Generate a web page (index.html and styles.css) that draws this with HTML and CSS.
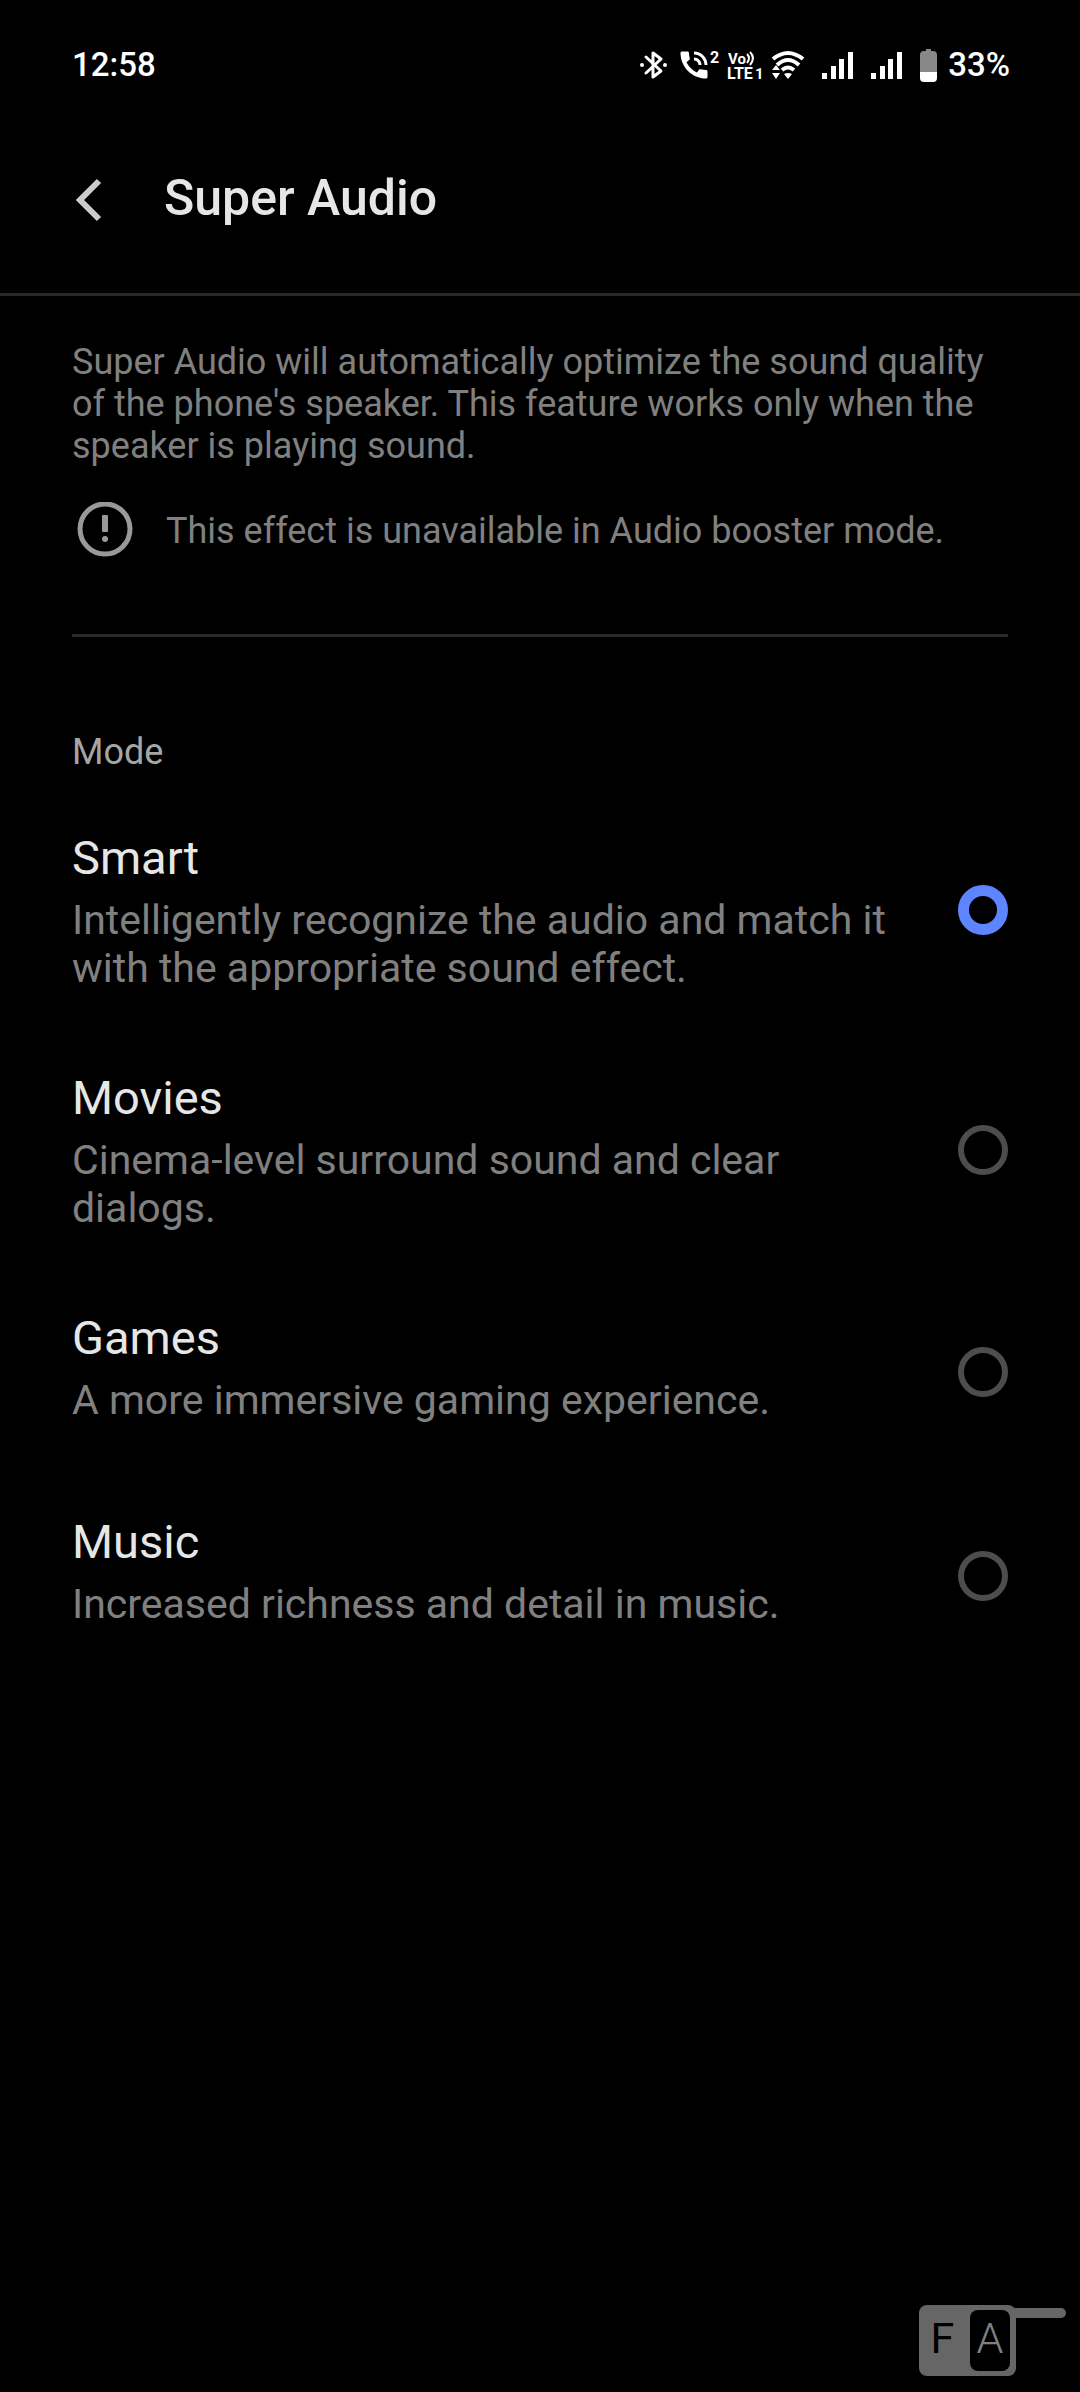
FILE: index.html
```html
<!DOCTYPE html>
<html lang="en">
<head>
  <meta charset="UTF-8" />
  <meta name="viewport" content="width=device-width, initial-scale=1" />
  <title>Super Audio</title>
  <link rel="stylesheet" href="styles.css">
</head>
<body>

  <div class="status-bar">
    <span class="time">12:58</span>
    <div class="status-icons">
      <!-- bluetooth -->
      <svg class="bt" width="28" height="34" viewBox="0 0 28 34" fill="none">
        <path d="M6 9 L21 23 L13 29 V5 L21 11 L6 25" stroke="#fff" stroke-width="3" stroke-linejoin="round" stroke-linecap="round"/>
        <circle cx="2" cy="17" r="2" fill="#fff"/>
        <circle cx="25" cy="17" r="2" fill="#fff"/>
      </svg>
      <!-- wifi calling -->
      <svg class="call" width="40" height="34" viewBox="0 0 40 34" fill="#fff">
        <g transform="translate(-4 -1) scale(1.5)">
          <path d="M20.01 15.38c-1.23 0-2.42-.2-3.53-.56-.35-.12-.74-.03-1.01.24l-1.57 1.97c-2.83-1.35-5.48-3.9-6.89-6.83l1.95-1.66c.27-.28.35-.67.24-1.02-.37-1.11-.56-2.3-.56-3.53 0-.54-.45-.99-.99-.99H4.19C3.65 3 3 3.24 3 3.99 3 13.28 10.73 21 20.01 21c.71 0 .99-.63.99-1.18v-3.45c0-.54-.45-.99-.99-.99z"/>
          <path d="M19 12h2c0-4.97-4.03-9-9-9v2c3.87 0 7 3.13 7 7zm-4 0h2c0-2.76-2.24-5-5-5v2c1.66 0 3 1.34 3 3z"/>
        </g>
        <text class="svg-text" x="30" y="15" font-size="16">2</text>
      </svg>
      <!-- volte -->
      <svg class="volte" width="38" height="34" viewBox="0 0 38 34" fill="#fff">
        <text class="svg-text" x="1" y="16" font-size="15">Vo</text>
        <path d="M20 6 q4 4 0 9 M23 4 q6 6 0 13" fill="none" stroke="#fff" stroke-width="2"/>
        <text class="svg-text" x="0" y="31" font-size="16">LTE</text>
        <text class="svg-text" x="28" y="31" font-size="15">1</text>
      </svg>
      <!-- wifi -->
      <svg class="wifi" width="34" height="34" viewBox="0 0 34 34" fill="none">
        <path d="M2 11 Q17 -1 32 11" stroke="#fff" stroke-width="4"/>
        <path d="M6 17 Q17 7 28 17" stroke="#fff" stroke-width="4"/>
        <path d="M11 22 Q17 17 23 22" stroke="#fff" stroke-width="4"/>
        <path d="M13 26 Q17 24 21 26 L17 31 Z M1 22 L5 17 L9 22 Z M1 25 H9 L5 31 Z" fill="#fff"/>
      </svg>
      <!-- sim 1 -->
      <svg class="signal" width="32" height="34" viewBox="0 0 32 34" fill="#fff">
        <path d="M0 25h5v6h-5z M9 18h5v13h-5z M17 11h5v20h-5z M26 4h5v27h-5z"/>
      </svg>
      <!-- sim 2 -->
      <svg class="signal" width="32" height="34" viewBox="0 0 32 34" fill="#fff">
        <path d="M0 25h5v6h-5z M9 18h5v13h-5z M17 11h5v20h-5z M26 4h5v27h-5z"/>
      </svg>
      <!-- battery -->
      <svg class="battery" width="18" height="34" viewBox="0 0 18 34">
        <path d="M6 1h5v2h2q4 0 4 4v17H0V7q0-4 4-4h2z" fill="#888"/>
        <path d="M0 24h17v6q0 4-4 4H4q-4 0-4-4z" fill="#fff"/>
      </svg>
      <span class="percent">33%</span>
    </div>
  </div>

  <header class="title-bar">
    <button class="back" type="button" aria-label="Back">
      <svg width="30" height="46" viewBox="0 0 30 46" fill="none">
        <path d="M27 3 L8 22 L27 41" stroke="#ccc" stroke-width="6"/>
      </svg>
    </button>
    <h1>Super Audio</h1>
  </header>

  <main class="content">
    <section class="intro">
      <p>Super Audio will automatically optimize the sound quality of the phone's speaker. This feature works only when the speaker is playing sound.</p>
      <div class="notice">
        <svg width="56" height="56" viewBox="0 0 56 56">
          <circle cx="28" cy="27" r="25" fill="none" stroke="#999" stroke-width="5"/>
          <rect x="25" y="13" width="6" height="17" rx="1" fill="#999"/>
          <circle cx="28" cy="37" r="3" fill="#999"/>
        </svg>
        <p>This effect is unavailable in Audio booster mode.</p>
      </div>
    </section>

    <h2>Mode</h2>

    <form class="modes">
      <label class="mode">
        <span class="mode-text">
          <span class="mode-name">Smart</span>
          <span class="mode-desc">Intelligently recognize the audio and match it with the appropriate sound effect.</span>
        </span>
        <input type="radio" name="mode" value="smart" checked>
      </label>
      <label class="mode">
        <span class="mode-text">
          <span class="mode-name">Movies</span>
          <span class="mode-desc">Cinema-level surround sound and clear dialogs.</span>
        </span>
        <input type="radio" name="mode" value="movies">
      </label>
      <label class="mode">
        <span class="mode-text">
          <span class="mode-name">Games</span>
          <span class="mode-desc">A more immersive gaming experience.</span>
        </span>
        <input type="radio" name="mode" value="games">
      </label>
      <label class="mode">
        <span class="mode-text">
          <span class="mode-name">Music</span>
          <span class="mode-desc">Increased richness and detail in music.</span>
        </span>
        <input type="radio" name="mode" value="music">
      </label>
    </form>
  </main>

  <div class="nav-handle"></div>
  <div class="badge">
    <span class="badge-f">F</span>
    <span class="badge-a">A</span>
  </div>

</body>
</html>
```
FILE: styles.css
```css
* { box-sizing: border-box; }
body {
  background: #000; color: #e6e6e6;
  font-family: Roboto, "Liberation Sans", sans-serif;
  margin: 0; min-height: 100vh;
}
h1, h2, p { margin: 0; font-weight: 400; }

.status-bar {
  display: flex; justify-content: space-between; align-items: center;
  height: 128px; padding: 2px 70px 0 72px;
  color: #fff; font-size: 33px; line-height: 40px; font-weight: 500;
}
.status-icons { display: flex; align-items: center; }
.status-icons svg { display: block; flex: none; }
.call { margin-left: 12px; }
.volte { margin-left: 7px; }
.wifi { margin-left: 6px; }
.signal { margin-left: 17px; }
.battery { margin-left: 17px; }
.percent { margin-left: 10px; }
.svg-text { font-family: Roboto, "Liberation Sans", sans-serif; font-weight: 700; }

.title-bar {
  display: flex; align-items: center; gap: 20px;
  height: 168px; padding: 0 72px 26px;
  border-bottom: 3px solid #292929;
}
.title-bar h1 { font-size: 50px; line-height: 60px; font-weight: 500; }
.back {
  display: flex; align-items: center;
  width: 72px; height: 72px; padding: 6px 0 0;
  background: none; border: none; cursor: pointer;
}

.content { padding: 0 72px; }
.intro {
  padding: 45px 0 76px;
  border-bottom: 3px solid #292929;
  color: #808080; font-size: 36px; line-height: 42px;
}
.notice { display: flex; align-items: center; gap: 33px; margin-top: 35px; padding-left: 5px; }
.notice svg { display: block; flex: none; }
.notice p { padding-top: 2px; }

h2 { padding-top: 94px; color: #a6a6a6; font-size: 36px; line-height: 42px; }

.modes { padding-top: 17px; }
.mode {
  display: flex; align-items: center; justify-content: space-between; gap: 64px;
  min-height: 204px; cursor: pointer;
}
.mode-text {
  display: flex; flex-direction: column; gap: 10px;
  align-self: flex-start; flex: 1; padding: 40px 0 38px;
}
.mode-name { font-size: 47px; line-height: 56px; }
.mode-desc { color: #808080; font-size: 41px; line-height: 48px; }
.mode input {
  appearance: none; flex: none;
  width: 50px; height: 50px; margin: 0;
  border: 6px solid #4d4d4d; border-radius: 50%;
  cursor: pointer;
}
.mode input:checked { border: 11px solid #5c85ff; }

/* floating keyboard badge and gesture handle */
.nav-handle {
  position: fixed; right: 14px; bottom: 74px;
  width: 64px; height: 10px; border-radius: 5px; background: #666;
}
.badge {
  position: fixed; right: 64px; bottom: 16px;
  display: flex; width: 97px; height: 71px; padding: 5px 6px;
  border-radius: 8px; background: #666;
  font-size: 43px; line-height: 56px; font-weight: 300;
  text-align: center;
}
.badge-f { flex: 1; padding-right: 10px; color: #000; font-weight: 400; }
.badge-a { width: 40px; border-radius: 8px; background: #000; color: #808080; }
```
